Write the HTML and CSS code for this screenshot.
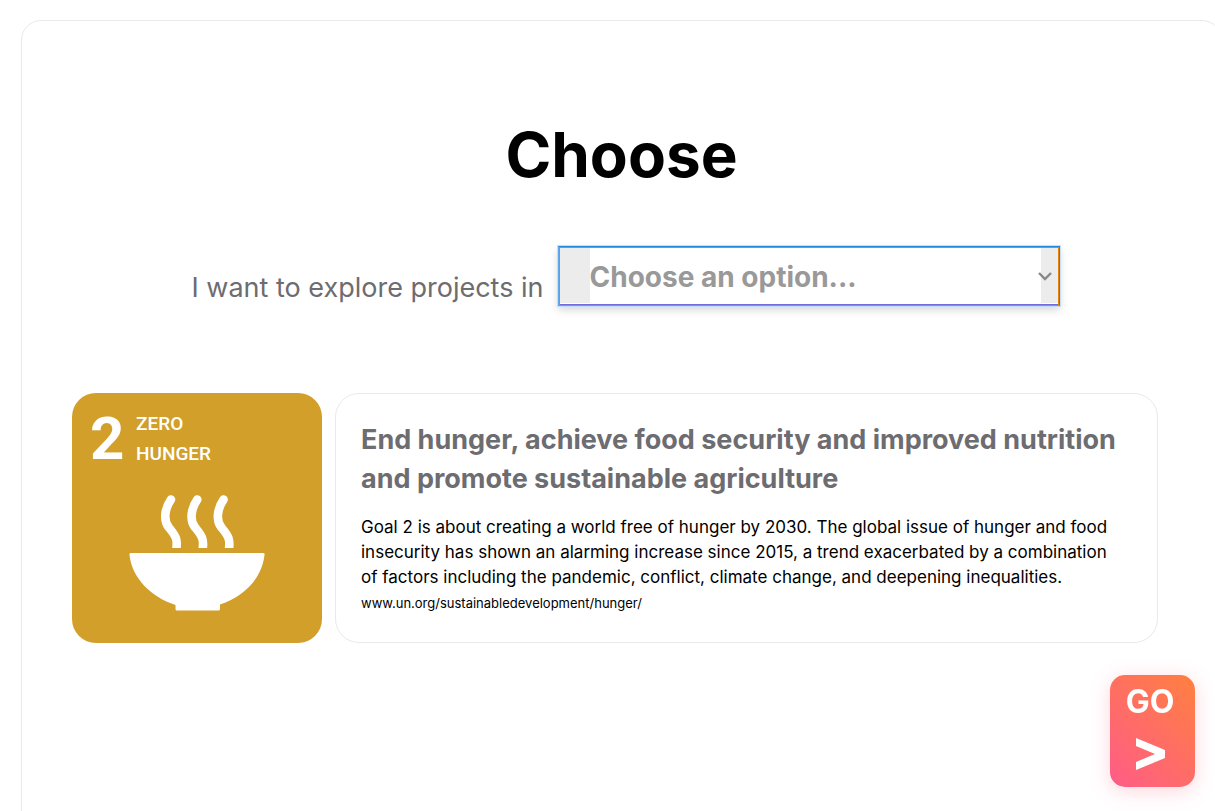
FILE: index.html
```html
<!DOCTYPE html>
<html lang="en">
<head>
<meta charset="utf-8">
<title>Choose</title>
<link rel="stylesheet" href="styles.css">
</head>
<body>
<main class="panel">
  <h1 class="title">Choose</h1>
  <form class="picker">
    <label class="picker-label" for="goal">I want to explore projects in</label>
    <div class="select-wrap">
      <select class="select" id="goal">
        <option>Choose an option...</option>
        <option>Zero Hunger</option>
      </select>
      <svg class="chevron" viewBox="0 0 14 9" aria-hidden="true"><path d="M1 1l6 6 6-6" fill="none" stroke="#888" stroke-width="2.400"/></svg>
    </div>
  </form>
  <section class="goal">
    <div class="tile">
      <div class="tile-head">
        <span class="tile-number">2</span>
        <span class="tile-name">ZERO<br>HUNGER</span>
      </div>
      <svg class="bowl" viewBox="0 0 136 116" aria-hidden="true">
        <clipPath id="rim"><path d="M0 0H136V53H0Z"/></clipPath>
        <g clip-path="url(#rim)" fill="none" stroke="#fff" stroke-width="8.600" stroke-linecap="round">
          <path d="M42 4.500C36 13 34 25 39.500 32C46 40 50 44 46.500 58"/>
          <path d="M68.300 4.500C62.300 13 60.300 25 65.800 32C72.300 40 76.300 44 72.800 58"/>
          <path d="M94.600 4.500C88.600 13 86.600 25 92.100 32C98.600 40 102.600 44 99.100 58"/>
        </g>
        <path fill="#fff" d="M2 58H134Q136 58 135.500 60C133 83 115 102 91 109.500V114Q91 115.500 89.500 115.500H48Q46.500 115.500 46.500 114V110C22 102 3 83 .5 60Q0 58 2 58Z"/>
      </svg>
    </div>
    <article class="card">
      <h2 class="card-title">End hunger, achieve food security and improved nutrition and promote sustainable agriculture</h2>
      <p class="card-text">Goal 2 is about creating a world free of hunger by 2030. The global issue of hunger and food insecurity has shown an alarming increase since 2015, a trend exacerbated by a combination of factors including the pandemic, conflict, climate change, and deepening inequalities.</p>
      <a class="card-link" href="#hunger">www.un.org/sustainabledevelopment/hunger/</a>
    </article>
  </section>
</main>
<button class="go" type="button">
  <span>GO</span>
  <svg class="go-arrow" viewBox="0 0 30 32" aria-hidden="true"><path d="M1 0L30 12V20L1 32V24L20 16L1 8Z" fill="#fff"/></svg>
</button>
</body>
</html>
```
FILE: styles.css
```css
* { box-sizing: border-box; }
html { overflow: hidden; }
body {
  margin: 0;
  background: #fff;
  color: #000;
  font-family: Inter, "Open Sans", sans-serif;
}
.panel {
  min-height: 100vh;
  margin: 20px -7px 0 21px;
  padding: 94px 50px 60px;
  border: 1px solid #e9e9e9;
  border-radius: 20px;
}
.title {
  margin: 0;
  font-size: 62px;
  line-height: 80px;
  font-weight: 700;
  text-align: center;
}
.picker {
  display: flex;
  justify-content: center;
  gap: 14px;
  margin-top: 51px;
  padding-left: 8px;
}
.picker-label {
  padding-top: 22px;
  font-size: 27px;
  line-height: 40px;
  color: #6d6c71;
}
.select-wrap {
  position: relative;
  width: 502px;
}
.select {
  appearance: none;
  display: block;
  width: 100%;
  height: 60px;
  padding: 2px 18px 0 31px;
  border: 1px solid;
  border-color: #2388e0 #2388e0 #e8820c #62aaf0;
  border-radius: 0;
  outline: 1px solid #c3e0f6;
  background: linear-gradient(90deg, #ececec 31px, #fff 31px, #fff calc(100% - 18px), #ececec calc(100% - 18px));
  box-shadow:
    inset 1px 1px 0 #e8820c,
    inset -1px 0 0 #e8820c,
    inset 0 -1px 0 #716bdc,
    inset 0 -2px 0 #fff,
    0 4px 8px rgba(0, 0, 0, .16);
  color: #999;
  font: 700 28px/40px Inter, "Open Sans", sans-serif;
}
.chevron {
  position: absolute;
  right: 8px;
  top: 26px;
  width: 14px;
  height: 9px;
}
.goal {
  display: flex;
  gap: 13px;
  margin: 85px 13px 0 0;
}
.tile {
  flex: none;
  width: 250px;
  height: 250px;
  padding: 16px 18px;
  border-radius: 24px;
  background: #d19f2a;
  color: #fff;
  font-family: Roboto, sans-serif;
  font-weight: 700;
}
.tile-head {
  display: flex;
  gap: 14px;
}
.tile-number {
  width: 32px;
  font-size: 60px;
  line-height: 60px;
}
.tile-name {
  font-size: 19px;
  line-height: 30px;
  font-weight: 500;
}
.bowl {
  display: block;
  width: 136px;
  height: 116px;
  margin: 26px 0 0 39px;
}
.card {
  flex: 1;
  padding: 26px 36px 26px 25px;
  border: 1px solid #e9e9e9;
  border-radius: 24px;
}
.card-title {
  margin: 0 0 17px;
  font-size: 27px;
  line-height: 39px;
  font-weight: 700;
  color: #6d6c71;
}
.card-text {
  margin: 0 0 4px;
  font-size: 17px;
  line-height: 25px;
}
.card-link {
  display: block;
  font-size: 13px;
  line-height: 18px;
  color: #000;
  text-decoration: none;
}
.go {
  position: fixed;
  right: 20px;
  bottom: 24px;
  display: flex;
  flex-direction: column;
  align-items: center;
  gap: 16px;
  width: 85px;
  height: 112px;
  padding: 7px 5px 0 0;
  border: 0;
  border-radius: 15px;
  background: linear-gradient(45deg, #ff5c87, #ff8040);
  box-shadow: 0 4px 20px rgba(255, 92, 120, .25);
  color: #fff;
  font: 700 32px/40px Inter, "Open Sans", sans-serif;
}
.go-arrow {
  width: 30px;
  height: 32px;
}
```
